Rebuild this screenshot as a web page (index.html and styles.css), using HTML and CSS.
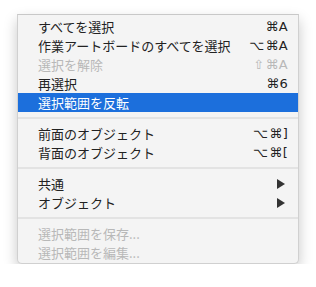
FILE: index.html
```html
<!DOCTYPE html>
<html lang="ja">
<head>
    <meta charset="UTF-8">
    <title>選択メニュー</title>
    <link rel="stylesheet" href="styles.css">
</head>
<body>
    <div class="menu">
        <div class="item"><span class="label">すべてを選択</span><span class="key">⌘A</span></div>
        <div class="item"><span class="label">作業アートボードのすべてを選択</span><span class="key"><span class="mod">⌥</span>⌘A</span></div>
        <div class="item disabled"><span class="label">選択を解除</span><span class="key"><span class="mod">⇧</span>⌘A</span></div>
        <div class="item"><span class="label">再選択</span><span class="key">⌘6</span></div>
        <div class="item active"><span class="label">選択範囲を反転</span></div>

        <div class="sep"></div>

        <div class="item"><span class="label">前面のオブジェクト</span><span class="key"><span class="mod">⌥</span>⌘]</span></div>
        <div class="item"><span class="label">背面のオブジェクト</span><span class="key"><span class="mod">⌥</span>⌘[</span></div>

        <div class="sep"></div>

        <div class="item"><span class="label">共通</span><span class="arrow"></span></div>
        <div class="item"><span class="label">オブジェクト</span><span class="arrow"></span></div>

        <div class="sep"></div>

        <div class="item disabled"><span class="label">選択範囲を保存...</span></div>
        <div class="item disabled"><span class="label">選択範囲を編集...</span></div>
    </div>
</body>
</html>
```

FILE: styles.css
```css
body {
    margin: 0;
    padding: 14px 0 0 17px;
    background-color: #ffffff;
    font-family: "Noto Sans CJK JP", "Noto Sans", sans-serif;
}

.menu {
    width: 280px;
    padding: 2px 0 1px;
    background-color: #f4f4f4;
    border: 1px solid #d0d0d0;
    border-top-color: #c8c8c8;
    border-radius: 0 0 5px 5px;
    box-shadow: 0 6px 14px rgba(0, 0, 0, 0.22);
}

.item {
    display: flex;
    align-items: center;
    justify-content: space-between;
    height: 19px;
    padding: 0 10px 0 20px;
    font-size: 13px;
    color: #222222;
}

.item.active {
    background-color: #1c6fdc;
    color: #ffffff;
}

.item.disabled {
    color: #b8b8b8;
}

.key {
    font-family: "DejaVu Sans", "Liberation Sans", sans-serif;
    font-size: 13px;
    letter-spacing: 0.3px;
}

.key .mod {
    margin-right: 1px;
}

.arrow {
    width: 0;
    height: 0;
    margin-right: 3px;
    border-top: 5px solid transparent;
    border-bottom: 5px solid transparent;
    border-left: 8px solid #333333;
}

.sep {
    height: 2px;
    margin: 5px 0;
    background-color: #e3e3e3;
}
```
